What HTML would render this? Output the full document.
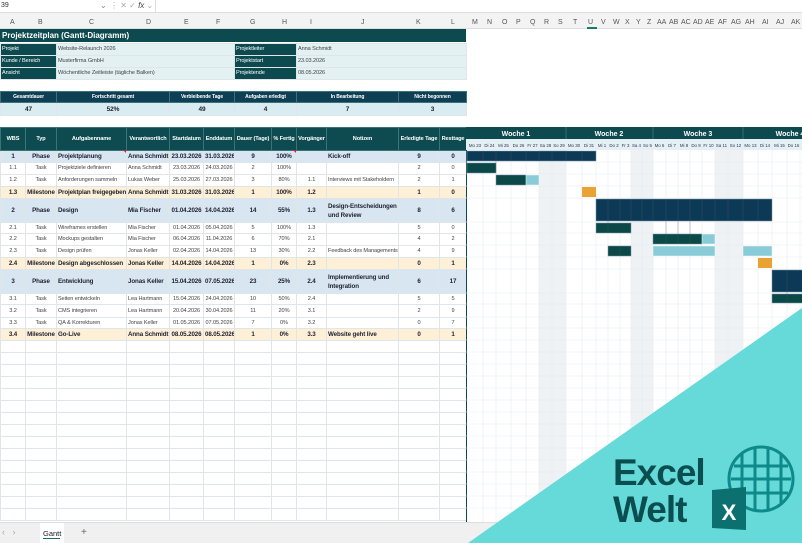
<!DOCTYPE html>
<html><head><meta charset="utf-8"><style>
*{margin:0;padding:0;box-sizing:border-box}
body{width:802px;height:543px;overflow:hidden;background:#fff;font-family:"Liberation Sans",sans-serif;position:relative;font-size:6.5px;color:#333}
.a{position:absolute}
table{border-collapse:collapse;table-layout:fixed;position:absolute;left:0}
td{border:1px solid #dfe6ea;overflow:hidden;white-space:nowrap;padding:0 1px;font-size:5.6px;line-height:9px;text-align:center;color:#444;letter-spacing:-0.1px}
td.l{text-align:left}
.hd td{background:#0e4b50;color:#fff;font-weight:bold;border-color:#3a7378;font-size:5.6px}
.ph td{background:#d7e6f0;font-weight:bold;color:#223;font-size:6.2px}
.ms td{background:#fdf0d6;font-weight:bold;color:#223;font-size:6.2px}
.cl{color:#555;font-size:7px;top:19px}
</style></head><body>
<div class="a" style="left:0;top:0;width:802px;height:13px;border-bottom:1px solid #ddd;background:#fff"></div>
<div class="a" style="left:1px;top:2px;font-size:7px;color:#333">39</div>
<div class="a" style="left:100px;top:1px;font-size:8px;color:#888">⌄</div>
<div class="a" style="left:110px;top:1px;font-size:8px;color:#aaa">⋮ ✕ ✓ <i style="color:#444">fx</i> ⌄</div>
<div class="a" style="left:155px;top:0;width:1px;height:12px;background:#ddd"></div>
<div class="a" style="left:0;top:13px;width:802px;height:16px;background:#f3f3f3;border-bottom:1px solid #ddd"></div>
<div class="a" style="left:587px;top:27px;width:10px;height:2px;background:#1a7a6a"></div>
<div class="a cl" style="left:10px">A</div><div class="a cl" style="left:38px">B</div><div class="a cl" style="left:89px">C</div><div class="a cl" style="left:146px">D</div><div class="a cl" style="left:184px">E</div><div class="a cl" style="left:216px">F</div><div class="a cl" style="left:250px">G</div><div class="a cl" style="left:282px">H</div><div class="a cl" style="left:310px">I</div><div class="a cl" style="left:361px">J</div><div class="a cl" style="left:416px">K</div><div class="a cl" style="left:451px">L</div>
<div class="a cl" style="left:472px">M</div><div class="a cl" style="left:487px">N</div><div class="a cl" style="left:502px">O</div><div class="a cl" style="left:516px">P</div><div class="a cl" style="left:530px">Q</div><div class="a cl" style="left:544px">R</div><div class="a cl" style="left:558px">S</div><div class="a cl" style="left:573px">T</div><div class="a cl" style="left:588px">U</div><div class="a cl" style="left:601px">V</div><div class="a cl" style="left:613px">W</div><div class="a cl" style="left:625px">X</div><div class="a cl" style="left:636px">Y</div><div class="a cl" style="left:647px">Z</div><div class="a cl" style="left:657px">AA</div><div class="a cl" style="left:669px">AB</div><div class="a cl" style="left:681px">AC</div><div class="a cl" style="left:693px">AD</div><div class="a cl" style="left:705px">AE</div><div class="a cl" style="left:718px">AF</div><div class="a cl" style="left:731px">AG</div><div class="a cl" style="left:745px">AH</div><div class="a cl" style="left:762px">AI</div><div class="a cl" style="left:776px">AJ</div><div class="a cl" style="left:791px">AK</div>

<div class="a" style="left:0;top:29px;width:466px;height:13px;background:#0d4a4f;color:#fff;font-weight:bold;font-size:8px;padding:2px 2px">Projektzeitplan (Gantt-Diagramm)</div>
<table style="top:43px;width:466px">
<colgroup><col style="width:56px"><col style="width:178px"><col style="width:62px"><col style="width:170px"></colgroup>
<tr style="height:12px"><td class="l" style="background:#0d4a4f;color:#fff">Projekt</td><td class="l" style="background:#e3f1f3">Website-Relaunch 2026</td><td class="l" style="background:#0d4a4f;color:#fff">Projektleiter</td><td class="l" style="background:#e3f1f3">Anna Schmidt</td></tr>
<tr style="height:12px"><td class="l" style="background:#0d4a4f;color:#fff">Kunde / Bereich</td><td class="l" style="background:#e3f1f3">Musterfirma GmbH</td><td class="l" style="background:#0d4a4f;color:#fff">Projektstart</td><td class="l" style="background:#e3f1f3">23.03.2026</td></tr>
<tr style="height:12px"><td class="l" style="background:#0d4a4f;color:#fff">Ansicht</td><td class="l" style="background:#e3f1f3">Wöchentliche Zeitleiste (tägliche Balken)</td><td class="l" style="background:#0d4a4f;color:#fff">Projektende</td><td class="l" style="background:#e3f1f3">08.05.2026</td></tr>
</table>
<table style="top:91px;width:466px">
<colgroup><col style="width:56px"><col style="width:113px"><col style="width:65px"><col style="width:62px"><col style="width:102px"><col style="width:68px"></colgroup>
<tr style="height:11px" class="hd"><td style="background:#0f3f55;font-size:5px">Gesamtdauer</td><td style="background:#0f3f55;font-size:5px">Fortschritt gesamt</td><td style="background:#0f3f55;font-size:5px">Verbleibende Tage</td><td style="background:#0f3f55;font-size:5px">Aufgaben erledigt</td><td style="background:#0f3f55;font-size:5px">In Bearbeitung</td><td style="background:#0f3f55;font-size:5px">Nicht begonnen</td></tr>
<tr style="height:13px"><td style="background:#d9ecf2;font-weight:bold;color:#223;font-size:6.5px">47</td><td style="background:#d9ecf2;font-weight:bold;color:#223;font-size:6.5px">52%</td><td style="background:#d9ecf2;font-weight:bold;color:#223;font-size:6.5px">49</td><td style="background:#d9ecf2;font-weight:bold;color:#223;font-size:6.5px">4</td><td style="background:#d9ecf2;font-weight:bold;color:#223;font-size:6.5px">7</td><td style="background:#d9ecf2;font-weight:bold;color:#223;font-size:6.5px">3</td></tr>
</table>

<table style="top:127px;width:466px">
<colgroup><col style="width:25px"><col style="width:31px"><col style="width:70px"><col style="width:43px"><col style="width:34px"><col style="width:31px"><col style="width:37px"><col style="width:25px"><col style="width:30px"><col style="width:72px"><col style="width:41px"><col style="width:27px"></colgroup>
<tr class="hd" style="height:23px"><td>WBS</td><td>Typ</td><td>Aufgabenname</td><td>Verantwortlich</td><td>Startdatum</td><td>Enddatum</td><td>Dauer (Tage)</td><td>% Fertig</td><td>Vorgänger</td><td>Notizen</td><td>Erledigte Tage</td><td>Resttage</td></tr>
<tr class="ph" style="height:12px"><td>1</td><td>Phase</td><td class="l">Projektplanung</td><td class="l">Anna Schmidt</td><td>23.03.2026</td><td>31.03.2026</td><td>9</td><td>100%</td><td></td><td class="l">Kick-off</td><td>9</td><td>0</td></tr>
<tr style="height:12px"><td>1.1</td><td>Task</td><td class="l">Projektziele definieren</td><td class="l">Anna Schmidt</td><td>23.03.2026</td><td>24.03.2026</td><td>2</td><td>100%</td><td></td><td></td><td>2</td><td>0</td></tr>
<tr style="height:12px"><td>1.2</td><td>Task</td><td class="l">Anforderungen sammeln</td><td class="l">Lukas Weber</td><td>25.03.2026</td><td>27.03.2026</td><td>3</td><td>80%</td><td>1.1</td><td class="l">Interviews mit Stakeholdern</td><td>2</td><td>1</td></tr>
<tr class="ms" style="height:12px"><td>1.3</td><td>Milestone</td><td class="l">Projektplan freigegeben</td><td class="l">Anna Schmidt</td><td>31.03.2026</td><td>31.03.2026</td><td>1</td><td>100%</td><td>1.2</td><td></td><td>1</td><td>0</td></tr>
<tr class="ph" style="height:24px"><td>2</td><td>Phase</td><td class="l">Design</td><td class="l">Mia Fischer</td><td>01.04.2026</td><td>14.04.2026</td><td>14</td><td>55%</td><td>1.3</td><td class="l">Design-Entscheidungen<br>und Review</td><td>8</td><td>6</td></tr>
<tr style="height:11px"><td>2.1</td><td>Task</td><td class="l">Wireframes erstellen</td><td class="l">Mia Fischer</td><td>01.04.2026</td><td>05.04.2026</td><td>5</td><td>100%</td><td>1.3</td><td></td><td>5</td><td>0</td></tr>
<tr style="height:12px"><td>2.2</td><td>Task</td><td class="l">Mockups gestalten</td><td class="l">Mia Fischer</td><td>06.04.2026</td><td>11.04.2026</td><td>6</td><td>70%</td><td>2.1</td><td></td><td>4</td><td>2</td></tr>
<tr style="height:12px"><td>2.3</td><td>Task</td><td class="l">Design prüfen</td><td class="l">Jonas Keller</td><td>02.04.2026</td><td>14.04.2026</td><td>13</td><td>30%</td><td>2.2</td><td class="l">Feedback des Managements</td><td>4</td><td>9</td></tr>
<tr class="ms" style="height:12px"><td>2.4</td><td>Milestone</td><td class="l">Design abgeschlossen</td><td class="l">Jonas Keller</td><td>14.04.2026</td><td>14.04.2026</td><td>1</td><td>0%</td><td>2.3</td><td></td><td>0</td><td>1</td></tr>
<tr class="ph" style="height:24px"><td>3</td><td>Phase</td><td class="l">Entwicklung</td><td class="l">Jonas Keller</td><td>15.04.2026</td><td>07.05.2026</td><td>23</td><td>25%</td><td>2.4</td><td class="l">Implementierung und<br>Integration</td><td>6</td><td>17</td></tr>
<tr style="height:11px"><td>3.1</td><td>Task</td><td class="l">Seiten entwickeln</td><td class="l">Lea Hartmann</td><td>15.04.2026</td><td>24.04.2026</td><td>10</td><td>50%</td><td>2.4</td><td></td><td>5</td><td>5</td></tr>
<tr style="height:13px"><td>3.2</td><td>Task</td><td class="l">CMS integrieren</td><td class="l">Lea Hartmann</td><td>20.04.2026</td><td>30.04.2026</td><td>11</td><td>20%</td><td>3.1</td><td></td><td>2</td><td>9</td></tr>
<tr style="height:11px"><td>3.3</td><td>Task</td><td class="l">QA &amp; Korrekturen</td><td class="l">Jonas Keller</td><td>01.05.2026</td><td>07.05.2026</td><td>7</td><td>0%</td><td>3.2</td><td></td><td>0</td><td>7</td></tr>
<tr class="ms" style="height:12px"><td>3.4</td><td>Milestone</td><td class="l">Go-Live</td><td class="l">Anna Schmidt</td><td>08.05.2026</td><td>08.05.2026</td><td>1</td><td>0%</td><td>3.3</td><td class="l">Website geht live</td><td>0</td><td>1</td></tr>
<tr style="height:12px"><td></td><td></td><td></td><td></td><td></td><td></td><td></td><td></td><td></td><td></td><td></td><td></td></tr>
<tr style="height:12px"><td></td><td></td><td></td><td></td><td></td><td></td><td></td><td></td><td></td><td></td><td></td><td></td></tr>
<tr style="height:12px"><td></td><td></td><td></td><td></td><td></td><td></td><td></td><td></td><td></td><td></td><td></td><td></td></tr>
<tr style="height:12px"><td></td><td></td><td></td><td></td><td></td><td></td><td></td><td></td><td></td><td></td><td></td><td></td></tr>
<tr style="height:12px"><td></td><td></td><td></td><td></td><td></td><td></td><td></td><td></td><td></td><td></td><td></td><td></td></tr>
<tr style="height:12px"><td></td><td></td><td></td><td></td><td></td><td></td><td></td><td></td><td></td><td></td><td></td><td></td></tr>
<tr style="height:12px"><td></td><td></td><td></td><td></td><td></td><td></td><td></td><td></td><td></td><td></td><td></td><td></td></tr>
<tr style="height:12px"><td></td><td></td><td></td><td></td><td></td><td></td><td></td><td></td><td></td><td></td><td></td><td></td></tr>
<tr style="height:12px"><td></td><td></td><td></td><td></td><td></td><td></td><td></td><td></td><td></td><td></td><td></td><td></td></tr>
<tr style="height:12px"><td></td><td></td><td></td><td></td><td></td><td></td><td></td><td></td><td></td><td></td><td></td><td></td></tr>
<tr style="height:12px"><td></td><td></td><td></td><td></td><td></td><td></td><td></td><td></td><td></td><td></td><td></td><td></td></tr>
<tr style="height:12px"><td></td><td></td><td></td><td></td><td></td><td></td><td></td><td></td><td></td><td></td><td></td><td></td></tr>
<tr style="height:12px"><td></td><td></td><td></td><td></td><td></td><td></td><td></td><td></td><td></td><td></td><td></td><td></td></tr>
<tr style="height:12px"><td></td><td></td><td></td><td></td><td></td><td></td><td></td><td></td><td></td><td></td><td></td><td></td></tr>
<tr style="height:12px"><td></td><td></td><td></td><td></td><td></td><td></td><td></td><td></td><td></td><td></td><td></td><td></td></tr>
</table>
<div class="a" style="left:123px;top:150px;border-left:3px solid transparent;border-top:3px solid #d22"></div>
<div class="a" style="left:293px;top:150px;border-left:3px solid transparent;border-top:3px solid #d22"></div>

<div class="a" style="left:466px;top:127px;width:336px;height:395px;overflow:hidden">
<svg width="336" height="395" viewBox="466 127 336 395" style="position:absolute;left:0;top:0">
<rect x="466" y="127" width="336" height="12" fill="#0d4a4f"/>
<rect x="466" y="139" width="336" height="11" fill="#e4f0f3"/>
<rect x="539" y="150" width="27" height="372" fill="#eef2f4"/>
<rect x="631" y="150" width="22" height="372" fill="#eef2f4"/>
<rect x="715" y="150" width="28" height="372" fill="#eef2f4"/>
<rect x="466" y="150" width="1" height="372" fill="#0d4a4f"/>
<g stroke="#e6ecef" stroke-width="0.6">
<path d="M483 150V522M496 150V522M511 150V522M526 150V522M539 150V522M552 150V522M566 150V522M582 150V522M596 150V522M608 150V522M620 150V522M631 150V522M642 150V522M653 150V522M666 150V522M678 150V522M690 150V522M702 150V522M715 150V522M728 150V522M743 150V522M758 150V522M772 150V522M787 150V522M800 150V522"/>
<path d="M466 162H802M466 174H802M466 186H802M466 198H802M466 222H802M466 233H802M466 245H802M466 257H802M466 269H802M466 293H802M466 304H802M466 317H802M466 328H802M466 340H802M466 352H802M466 364H802M466 376H802M466 388H802M466 400H802M466 412H802M466 424H802M466 436H802M466 448H802M466 460H802M466 472H802M466 484H802M466 496H802M466 508H802"/>
</g>
<g stroke="#3b7a80" stroke-width="0.8"><path d="M566 127V139M653 127V139M743 127V139"/></g>
<g fill="#fff" font-family="Liberation Sans" font-weight="bold" font-size="7" text-anchor="middle"><text x="516" y="136">Woche 1</text><text x="609" y="136">Woche 2</text><text x="698" y="136">Woche 3</text><text x="790" y="136">Woche 4</text></g>
<g fill="#335" font-family="Liberation Sans" font-size="4.4" text-anchor="middle">
<text x="475" y="147">Mo 23</text><text x="489.5" y="147">Di 24</text><text x="503.5" y="147">Mi 25</text><text x="518.5" y="147">Do 26</text><text x="532.5" y="147">Fr 27</text><text x="545.5" y="147">Sa 28</text><text x="559" y="147">So 29</text><text x="574" y="147">Mo 30</text><text x="589" y="147">Di 31</text><text x="602" y="147">Mi 1</text><text x="614" y="147">Do 2</text><text x="625.5" y="147">Fr 3</text><text x="636.5" y="147">Sa 4</text><text x="647.5" y="147">So 5</text><text x="659.5" y="147">Mo 6</text><text x="672" y="147">Di 7</text><text x="684" y="147">Mi 8</text><text x="696" y="147">Do 9</text><text x="708.5" y="147">Fr 10</text><text x="721.5" y="147">Sa 11</text><text x="735.5" y="147">So 12</text><text x="750.5" y="147">Mo 13</text><text x="765" y="147">Di 14</text><text x="779.5" y="147">Mi 15</text><text x="793.5" y="147">Do 16</text></g>
<g fill="#0c3a56" stroke="#7a9aab" stroke-width="0.5">
<rect x="467" y="151" width="129" height="10"/><rect x="596" y="199" width="176" height="22"/><rect x="772" y="270" width="32" height="22"/></g>
<g fill="#0b4848" stroke="#7a9aab" stroke-width="0.5">
<rect x="467" y="163" width="29" height="10"/><rect x="496" y="175" width="30" height="10"/><rect x="596" y="223" width="35" height="10"/><rect x="653" y="234" width="49" height="10"/><rect x="608" y="246" width="23" height="10"/><rect x="772" y="294" width="32" height="9"/></g>
<g fill="#8acbd8" stroke="#fff" stroke-width="0.4">
<rect x="526" y="175" width="13" height="10"/><rect x="702" y="234" width="13" height="10"/><rect x="653" y="246" width="62" height="10"/><rect x="743" y="246" width="29" height="10"/></g>
<g fill="#eaa333"><rect x="582" y="187" width="14" height="10"/><rect x="758" y="258" width="14" height="10"/></g>
<g stroke="#555" stroke-width="0.3"><path d="M483 151V161M496 151V173M511 151V161M526 151V161M539 151V161M552 151V161M566 151V161M582 151V161M608 199V233M620 199V221M631 199V221M642 199V221M653 199V221M666 199V244M678 199V244M690 199V244M702 199V221M715 199V221M728 199V221M743 199V221M758 199V221M620 246V256M787 270V303"/></g>
</svg></div>

<div class="a" style="left:0;top:522px;width:802px;height:21px;background:#f0f0f0;border-top:1px solid #ddd"></div>
<div class="a" style="left:2px;top:527px;font-size:9px;color:#aaa">‹ &nbsp; ›</div>
<div class="a" style="left:40px;top:523px;width:24px;height:20px;background:#fff"></div>
<div class="a" style="left:43px;top:529px;font-size:7.5px;color:#222">Gantt</div>
<div class="a" style="left:43px;top:538px;width:17px;height:1px;background:#1a6a6a"></div>
<div class="a" style="left:81px;top:527px;font-size:10px;color:#666">+</div>

<svg class="a" style="left:0;top:0" width="802" height="543">
<polygon points="468,543 802,308 802,543" fill="#66d9d9"/>
<g stroke="#0e8a8a" stroke-width="3" fill="none">
<circle cx="761" cy="479" r="32"/>
<path d="M742 453V505M755 448V510M768 448V510M781 453V505M734 466H788M731 479H791M734 493H788"/>
</g>
<polygon points="712,490 746,487 746,530 712,528" fill="#0c7070"/>
<text x="729" y="520" text-anchor="middle" font-family="Liberation Sans" font-weight="bold" font-size="22" fill="#fff">X</text>
<text x="613" y="485" font-family="Liberation Sans" font-weight="bold" font-size="37" fill="#0b4e50" letter-spacing="-1">Excel</text>
<text x="613" y="522" font-family="Liberation Sans" font-weight="bold" font-size="37" fill="#0b4e50" letter-spacing="-1">Welt</text>
</svg>
</body></html>
